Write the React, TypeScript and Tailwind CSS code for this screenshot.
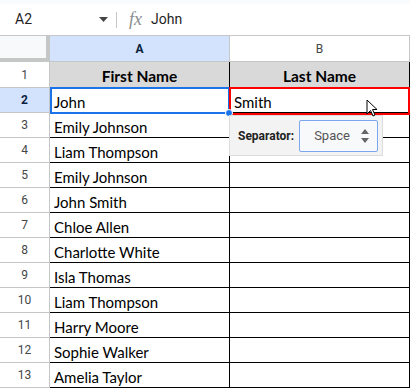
import React from "react";

const firstNames = [
  "John",
  "Emily Johnson",
  "Liam Thompson",
  "Emily Johnson",
  "John Smith",
  "Chloe Allen",
  "Charlotte White",
  "Isla Thomas",
  "Liam Thompson",
  "Harry Moore",
  "Sophie Walker",
  "Amelia Taylor",
];

export default function App() {
  return (
    <div className="relative w-[410px] h-[388px] overflow-hidden bg-white" style={{ fontFamily: "Roboto, Arial, sans-serif" }}>
      {/* top strip */}
      <div className="h-[4px] bg-[#f9fbfd]" />
      {/* formula bar */}
      <div className="h-[32px] flex items-center border-b border-[#c7c7c7] bg-white">
        <div className="w-[90px] pl-[15px] text-[14px] text-[#1f1f1f]">A2</div>
        <div className="w-[26px] flex items-center justify-center">
          <svg width="9" height="5" viewBox="0 0 9 5">
            <path d="M0 0 L9 0 L4.5 5 Z" fill="#444746" />
          </svg>
        </div>
        <div className="w-px h-[16px] bg-[#c7c7c7]" />
        <div className="pl-[12px] pr-[9px] text-[18px] italic text-[#8a8d90]" style={{ fontFamily: "'Liberation Serif', serif" }}>
          fx
        </div>
        <div className="text-[14px] text-[#1f1f1f]">John</div>
      </div>

      {/* column header row */}
      <div className="flex h-[26px]">
        <div className="w-[50px] h-[26px] bg-[#f8f9fa] border-r-4 border-b-4 border-[#c4c7c5]" />
        <div className="w-[180px] flex items-center justify-center bg-[#d3e3fd] border-r border-b border-[#c4c7c5] text-[12px] font-bold text-[#0b1f3d]">
          A
        </div>
        <div className="w-[180px] flex items-center justify-center bg-white border-r border-b border-[#c4c7c5] text-[12px] text-[#444746]">
          B
        </div>
      </div>

      {/* row 1 */}
      <div className="flex h-[26px]">
        <div className="w-[50px] flex items-center justify-center bg-white border-r border-b border-[#c4c7c5] text-[12px] text-[#444746]">
          1
        </div>
        <div className="w-[180px] flex items-center justify-center pt-[3px] bg-[#d9d9d9] border-r border-black text-[15.5px] font-bold text-black" style={{ fontFamily: "Lato, sans-serif" }}>
          First Name
        </div>
        <div className="w-[180px] flex items-center justify-center pt-[3px] bg-[#d9d9d9] border-r border-black text-[15.5px] font-bold text-black" style={{ fontFamily: "Lato, sans-serif" }}>
          Last Name
        </div>
      </div>

      {firstNames.map((name, i) => {
        const rowNum = i + 2;
        const selected = rowNum === 2;
        return (
          <div key={i} className="flex h-[25px]">
            <div
              className={
                selected
                  ? "w-[50px] flex items-center justify-center bg-[#d3e3fd] border-r border-b border-[#c4c7c5] text-[12px] font-bold text-[#0b1f3d]"
                  : "w-[50px] flex items-center justify-center bg-white border-r border-b border-[#c4c7c5] text-[12px] text-[#444746]"
              }
            >
              {rowNum}
            </div>
            <div className="w-[180px] flex items-center pl-[4px] pt-[5px] border-r border-b border-black text-[15px] text-black" style={{ fontFamily: "Lato, sans-serif" }}>
              {name}
            </div>
            <div className="w-[180px] flex items-center pl-[4px] pt-[5px] border-r border-b border-black text-[15px] text-black" style={{ fontFamily: "Lato, sans-serif" }}>
              {selected ? "Smith" : ""}
            </div>
          </div>
        );
      })}

      {/* A2 selection */}
      <div className="absolute left-[50px] top-[87px] w-[180px] h-[27px] border-2 border-[#1a73e8] pointer-events-none" />
      {/* B2 red highlight */}
      <div className="absolute left-[229px] top-[87px] w-[181px] h-[28px] border-2 border-[#ff0000] pointer-events-none" />
      {/* fill handle */}
      <div className="absolute left-[225px] top-[109px] w-[8px] h-[8px] rounded-full bg-[#1a73e8] border border-white" />

      {/* popup */}
      <div className="absolute left-[229px] top-[115px] w-[154px] h-[41px] bg-[#f3f3f3] border border-[#dcdcdc] flex items-center pl-[8px] gap-[5px]">
        <span className="text-[12px] font-bold text-[#222]">Separator:</span>
        <div className="w-[79px] h-[32px] border border-[#7aa7f0] rounded-[2px] bg-[#f8f9fa] flex items-center justify-between pl-[14px] pr-[8px]">
          <span className="text-[13px] text-[#555]">Space</span>
          <svg width="8" height="14" viewBox="0 0 8 14">
            <path d="M4 0 L8 5 L0 5 Z" fill="#666" />
            <path d="M4 14 L8 9 L0 9 Z" fill="#666" />
          </svg>
        </div>
      </div>

      {/* mouse cursor */}
      <svg className="absolute left-[366px] top-[99px]" width="14" height="20" viewBox="0 0 14 20">
        <path d="M1 1 L1 15 L4.5 11.5 L7 17 L9 16 L6.5 10.5 L11 10.5 Z" fill="white" stroke="black" strokeWidth="1" strokeLinejoin="round" />
      </svg>
    </div>
  );
}
